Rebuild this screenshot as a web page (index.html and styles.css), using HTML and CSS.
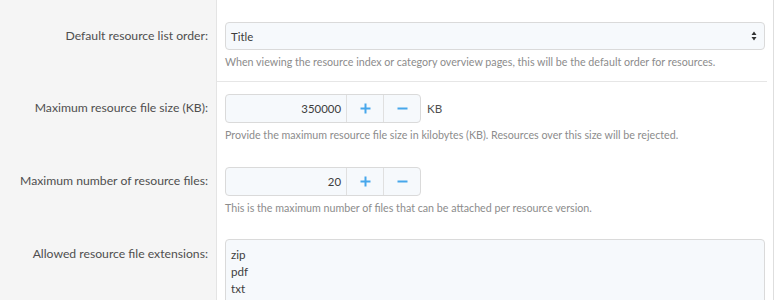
FILE: index.html
```html
<!DOCTYPE html>
<html>
<head>
<meta charset="utf-8">
<link rel="stylesheet" href="styles.css">
</head>
<body>
<div class="form">
  <div class="row">
    <div class="label">Default resource list order:</div>
    <div class="field">
      <div class="select">
        <span>Title</span>
        <svg class="arrows" width="6" height="10" viewBox="0 0 6 10"><path d="M3 0.5 L5.5 4 L0.5 4 Z M0.5 6 L5.5 6 L3 9.5 Z" fill="#333"/></svg>
      </div>
      <div class="hint">When viewing the resource index or category overview pages, this will be the default order for resources.</div>
    </div>
  </div>
  <div class="row row-sep">
    <div class="label">Maximum resource file size (KB):</div>
    <div class="field">
      <div class="inline">
        <div class="number">
          <div class="value">350000</div>
          <div class="btn"><svg width="11" height="11" viewBox="0 0 11 11"><path d="M5.5 0.5V10.5M0.5 5.5H10.5" stroke="#47a7eb" stroke-width="2"/></svg></div>
          <div class="btn"><svg width="11" height="11" viewBox="0 0 11 11"><path d="M0.5 5.5H10.5" stroke="#47a7eb" stroke-width="2"/></svg></div>
        </div>
        <span class="unit">KB</span>
      </div>
      <div class="hint">Provide the maximum resource file size in kilobytes (KB). Resources over this size will be rejected.</div>
    </div>
  </div>
  <div class="row">
    <div class="label">Maximum number of resource files:</div>
    <div class="field">
      <div class="inline">
        <div class="number">
          <div class="value">20</div>
          <div class="btn"><svg width="11" height="11" viewBox="0 0 11 11"><path d="M5.5 0.5V10.5M0.5 5.5H10.5" stroke="#47a7eb" stroke-width="2"/></svg></div>
          <div class="btn"><svg width="11" height="11" viewBox="0 0 11 11"><path d="M0.5 5.5H10.5" stroke="#47a7eb" stroke-width="2"/></svg></div>
        </div>
      </div>
      <div class="hint">This is the maximum number of files that can be attached per resource version.</div>
    </div>
  </div>
  <div class="row">
    <div class="label">Allowed resource file extensions:</div>
    <div class="field field-last">
      <div class="textarea">zip<br>pdf<br>txt</div>
    </div>
  </div>
</div>
</body>
</html>
```

FILE: styles.css
```css
html, body {
  margin: 0;
  padding: 0;
  background: #fff;
  overflow: hidden;
}
body {
  font-family: Lato, "Open Sans", sans-serif;
  font-size: 12.2px;
  color: #4f4f4f;
}
.form {
  width: 773px;
  border-right: 1px solid #dedede;
  padding-top: 9px;
  height: 291px;
  background: linear-gradient(to right, #f5f5f5 216px, #e4e4e4 216px, #e4e4e4 217px, #fff 217px);
}
.row {
  display: grid;
  grid-template-columns: 217px 1fr;
}
.label {
  text-align: right;
  white-space: nowrap;
  padding: 18px 9px 0 0;
  line-height: 18px;
}
.field {
  padding: 13px 8px 10px 8px;
}
.field-last {
  padding-top: 12px;
}
.row-sep .field {
  background: linear-gradient(#e6e6e6, #e6e6e6) no-repeat 0 0 / calc(100% - 6px) 1px;
}
.select {
  height: 28px;
  box-sizing: border-box;
  border: 1px solid #dadada;
  border-radius: 4px;
  background: #f6f9fc;
  display: flex;
  align-items: center;
  justify-content: space-between;
  padding: 0 7px 0 5px;
  font-size: 11.4px;
  color: #3d3d3d;
}
.hint {
  margin-top: 3px;
  line-height: 18px;
  font-size: 10.7px;
  white-space: nowrap;
  color: #8c8c8c;
}
.inline {
  display: flex;
  align-items: center;
  gap: 6px;
}
.number {
  display: flex;
  height: 29px;
  width: 196px;
  box-sizing: border-box;
  border: 1px solid #dadada;
  border-radius: 4px;
  background: #f6f9fc;
}
.value {
  flex: 1;
  text-align: right;
  line-height: 27px;
  padding-right: 5px;
  font-size: 11.4px;
  color: #3d3d3d;
}
.btn {
  width: 36px;
  border-left: 1px solid #e0e0e0;
  display: flex;
  align-items: center;
  justify-content: center;
}
.unit {
  font-size: 11.6px;
  color: #4f4f4f;
}
.textarea {
  box-sizing: border-box;
  height: 70px;
  border: 1px solid #dadada;
  border-radius: 4px;
  background: #f6f9fc;
  padding: 6px 5px;
  line-height: 17px;
  font-size: 11.6px;
  color: #3d3d3d;
}
```
